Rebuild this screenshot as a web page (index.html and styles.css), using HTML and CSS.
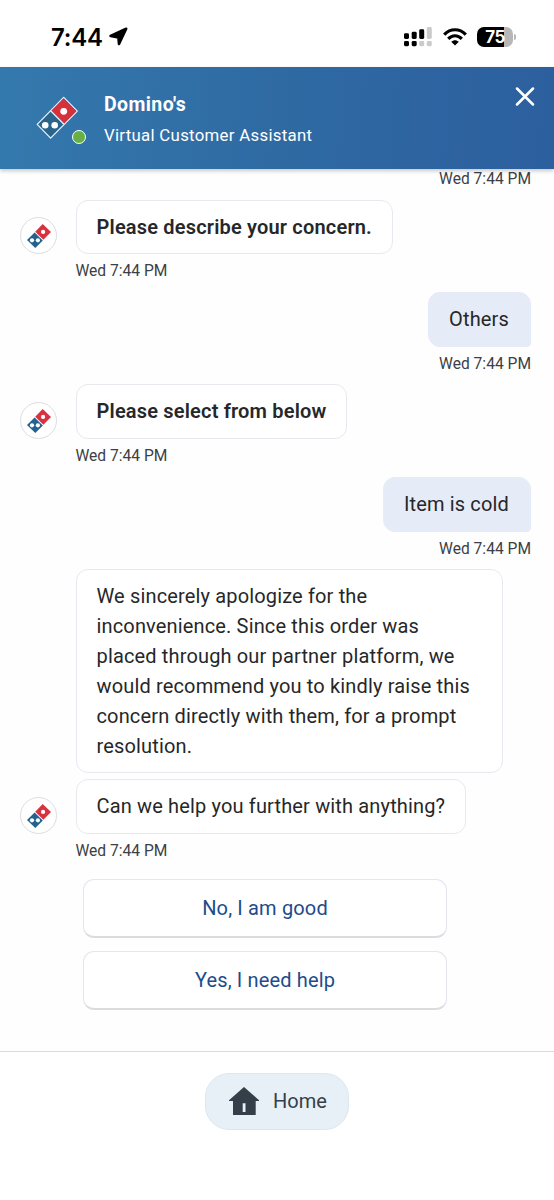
FILE: index.html
```html
<!DOCTYPE html>
<html lang="en">
<head>
<meta charset="utf-8">
<title>Domino's Virtual Customer Assistant</title>
<link rel="stylesheet" href="styles.css">
</head>
<body>
<svg class="defs" width="0" height="0" aria-hidden="true">
  <symbol id="domino" viewBox="0 0 24 24">
    <path d="M15.7 0 L24 8 L16.4 15.8 L8.2 7.7 Z" fill="#d8313f"/>
    <path d="M7.6 8.4 L15.8 16.4 L8.3 24 L0 16 Z" fill="#23628f"/>
    <circle cx="16.1" cy="7.9" r="2.1" fill="#fff"/>
    <circle cx="5" cy="16.3" r="2.1" fill="#fff"/>
    <circle cx="10.9" cy="16.3" r="2.1" fill="#fff"/>
  </symbol>
</svg>
<div class="screen">
  <div class="status">
    <div class="clock">
      <span class="time">7:44</span>
      <svg class="arrow" width="20" height="20" viewBox="0 0 20 20"><path d="M17.2 1.8 L10 17 L9.4 10.4 L1.6 8.9 Z" fill="#000" stroke="#000" stroke-width="2.6" stroke-linejoin="round"/></svg>
    </div>
    <div class="indicators">
      <svg width="28" height="20" viewBox="0 0 28 20">
        <rect x="0" y="6.3" width="5" height="5.6" rx="1.4"/><rect x="7.7" y="4.8" width="5" height="7.1" rx="1.4"/><rect x="15.2" y="2.3" width="5" height="9.6" rx="1.4"/><rect x="22.8" y="0" width="5" height="11.9" rx="1.4" fill="#cbcbcb"/>
        <rect x="0" y="14" width="5" height="5.2" rx="1.4"/><rect x="7.7" y="14" width="5" height="5.2" rx="1.4"/><rect x="15.2" y="14" width="5" height="5.2" rx="1.4" fill="#cbcbcb"/><rect x="22.8" y="14" width="5" height="5.2" rx="1.4" fill="#cbcbcb"/>
      </svg>
      <svg class="wifi" width="24" height="18" viewBox="0 0 24 18">
        <g fill="none" stroke="#000" stroke-width="3.1"><path d="M1.2 6.6 C7.4 .1 16.6 .1 22.8 6.6"/><path d="M5.2 10.8 C9.2 6.7 14.8 6.7 18.8 10.8"/></g>
        <path d="M8.2 13.7 C10.5 11.6 13.5 11.6 15.8 13.7 L12 17.6 Z"/>
      </svg>
      <div class="battery"><span class="level">75</span><i class="tip"></i></div>
    </div>
  </div>

  <header class="header">
    <div class="brand">
      <svg width="43" height="44" viewBox="0 0 43 44">
        <path d="M27.7 1.4 L41.3 15.1 L14.6 42.1 L1.2 28.4 Z" fill="#2b648b" stroke="#e3f1fa" stroke-width="1.3" stroke-linejoin="round"/>
        <path d="M27.7 2.4 L40.3 15.1 L28 27.6 L15.4 14.8 Z" fill="#d6303e"/>
        <path d="M14.6 14.7 L28.2 28.5" stroke="#e3f1fa" stroke-width="1.3"/>
        <circle cx="27.7" cy="15.3" r="3.4" fill="#fff"/><circle cx="9.2" cy="29.3" r="3.3" fill="#fff"/><circle cx="18.7" cy="29.3" r="3.3" fill="#fff"/>
      </svg>
      <i class="online"></i>
    </div>
    <div class="titles">
      <div class="name">Domino's</div>
      <div class="role">Virtual Customer Assistant</div>
    </div>
    <svg class="close" width="20" height="20" viewBox="0 0 20 20"><path d="M2 1.5 L18 17.5 M18 1.5 L2 17.5" stroke="#fff" stroke-width="2.5" stroke-linecap="round"/></svg>
  </header>

  <main class="chat">
    <div class="stamp right">Wed 7:44 PM</div>
    <div class="bot"><span class="avatar"><svg width="24" height="24"><use href="#domino"/></svg></span><div class="bubble strong">Please describe your concern.</div></div>
    <div class="stamp">Wed 7:44 PM</div>
    <div class="user"><div class="bubble">Others</div></div>
    <div class="stamp right">Wed 7:44 PM</div>
    <div class="bot"><span class="avatar"><svg width="24" height="24"><use href="#domino"/></svg></span><div class="bubble strong">Please select from below</div></div>
    <div class="stamp">Wed 7:44 PM</div>
    <div class="user"><div class="bubble">Item is cold</div></div>
    <div class="stamp right">Wed 7:44 PM</div>
    <div class="bot stacked"><div class="bubble long">We sincerely apologize for the<br>inconvenience. Since this order was<br>placed through our partner platform, we<br>would recommend you to kindly raise this<br>concern directly with them, for a prompt<br>resolution.</div></div>
    <div class="bot"><span class="avatar"><svg width="24" height="24"><use href="#domino"/></svg></span><div class="bubble">Can we help you further with anything?</div></div>
    <div class="stamp">Wed 7:44 PM</div>
    <div class="choices">
      <button class="choice">No, I am good</button>
      <button class="choice">Yes, I need help</button>
    </div>
  </main>

  <footer class="footer">
    <button class="home">
      <svg width="30" height="28" viewBox="0 0 30 28"><path fill-rule="evenodd" d="M15 0 L30 13.2 V14 H26.7 V28 H4 V14 H0 V13.2 Z M13.7 16.3 H16.5 V25 H13.7 Z" fill="#353f49"/></svg>
      <span>Home</span>
    </button>
  </footer>
</div>
</body>
</html>
```

FILE: styles.css
```css
* { box-sizing: border-box; }
body { margin: 0; background: #fff; font-family: Roboto, "Liberation Sans", sans-serif; color: #262729; }
svg { display: block; flex: none; }
.defs { position: absolute; }
.screen { display: flex; flex-direction: column; width: 554px; height: 1200px; overflow: hidden; }
.status { display: flex; justify-content: space-between; flex: none; height: 67px; padding: 0 38px 0 51px; }
.clock { display: flex; align-items: flex-start; gap: 6px; padding-top: 23px; }
.time { font: 600 24px/30px Inter, sans-serif; letter-spacing: -.2px; color: #000; }
.arrow { margin-top: 4px; }
.indicators { display: flex; align-items: flex-start; padding-top: 27px; }
.indicators > svg:first-child { margin-right: 1px; }
.wifi { margin: 1px 0 0 10px; }
.battery { display: flex; align-items: center; margin-left: 10px; }
.level { width: 36px; height: 20px; border-radius: 7px; background: linear-gradient(90deg, #000 75%, #b7b7b7 75%); color: #fff; font: 700 17px/20px Inter, sans-serif; text-align: center; letter-spacing: -.5px; }
.tip { width: 2px; height: 6px; margin-left: 1px; border-radius: 0 2px 2px 0; background: #b7b7b7; }
.header { position: relative; z-index: 1; display: flex; flex: none; height: 102px; padding: 0 19px 0 36px; background: linear-gradient(95deg, #3479ad, #2f6aa3 50%, #2c5f9e); box-shadow: 0 2px 4px rgba(0,0,0,.22); color: #fff; }
.brand { position: relative; width: 68px; padding-top: 29px; }
.online { position: absolute; left: 36px; top: 63px; width: 14px; height: 14px; border: 1.5px solid #fff; border-radius: 50%; background: #68b045; }
.titles { flex: 1; padding-top: 23px; }
.name { font-size: 19.5px; font-weight: 700; line-height: 29px; letter-spacing: .4px; }
.role { font-size: 16.8px; line-height: 32px; letter-spacing: .3px; }
.close { margin-top: 20px; }
.chat { flex: none; height: 889px; overflow: hidden; margin-top: -7px; padding: 0 23px 0 20px; background: #fefefe; }
.stamp { height: 37.5px; padding: 0 0 3px 55.5px; font-size: 15.6px; line-height: 34.5px; color: #3c3f45; white-space: nowrap; }
.right { text-align: right; }
.bot { display: flex; align-items: flex-end; gap: 18.5px; }
.stacked { padding-left: 55.5px; margin-bottom: 6px; }
.avatar { display: flex; align-items: center; justify-content: center; flex: none; width: 37px; height: 37px; border: 1px solid #dddde1; border-radius: 50%; background: #fff; }
.bubble { border: 1px solid #e8e9ef; border-radius: 12px; background: #fff; padding: 12px 20px 11px; font-size: 20px; line-height: 29.9px; letter-spacing: .15px; white-space: nowrap; }
.strong { font-weight: 600; letter-spacing: .18px; }
.long { width: 427px; padding-bottom: 10.7px; }
.user { display: flex; justify-content: flex-end; }
.user .bubble { padding-right: 21px; border-color: #e5ebf7; border-bottom-right-radius: 4px; background: #e5ebf7; }
.choices { display: flex; flex-direction: column; gap: 13.5px; width: 364px; margin: 7px 0 0 63px; }
.choice { height: 59px; padding: 0; border: 1px solid #e4e6ef; border-bottom: 2px solid #dbdce0; border-radius: 11px; background: #fff; color: #1d4c8c; font: 400 20px Roboto, sans-serif; letter-spacing: .15px; }
.footer { display: flex; align-items: flex-start; justify-content: center; flex: 1; padding-top: 21px; border-top: 1.5px solid #d9dbdd; background: #fff; }
.home { display: flex; align-items: center; justify-content: center; gap: 14px; width: 144px; height: 57px; padding: 0 0 2px 2px; border: 1px solid #dce8ee; border-radius: 24px; background: #e7f0f6; color: #353f49; font: 400 20px Roboto, sans-serif; letter-spacing: 0; }
```
